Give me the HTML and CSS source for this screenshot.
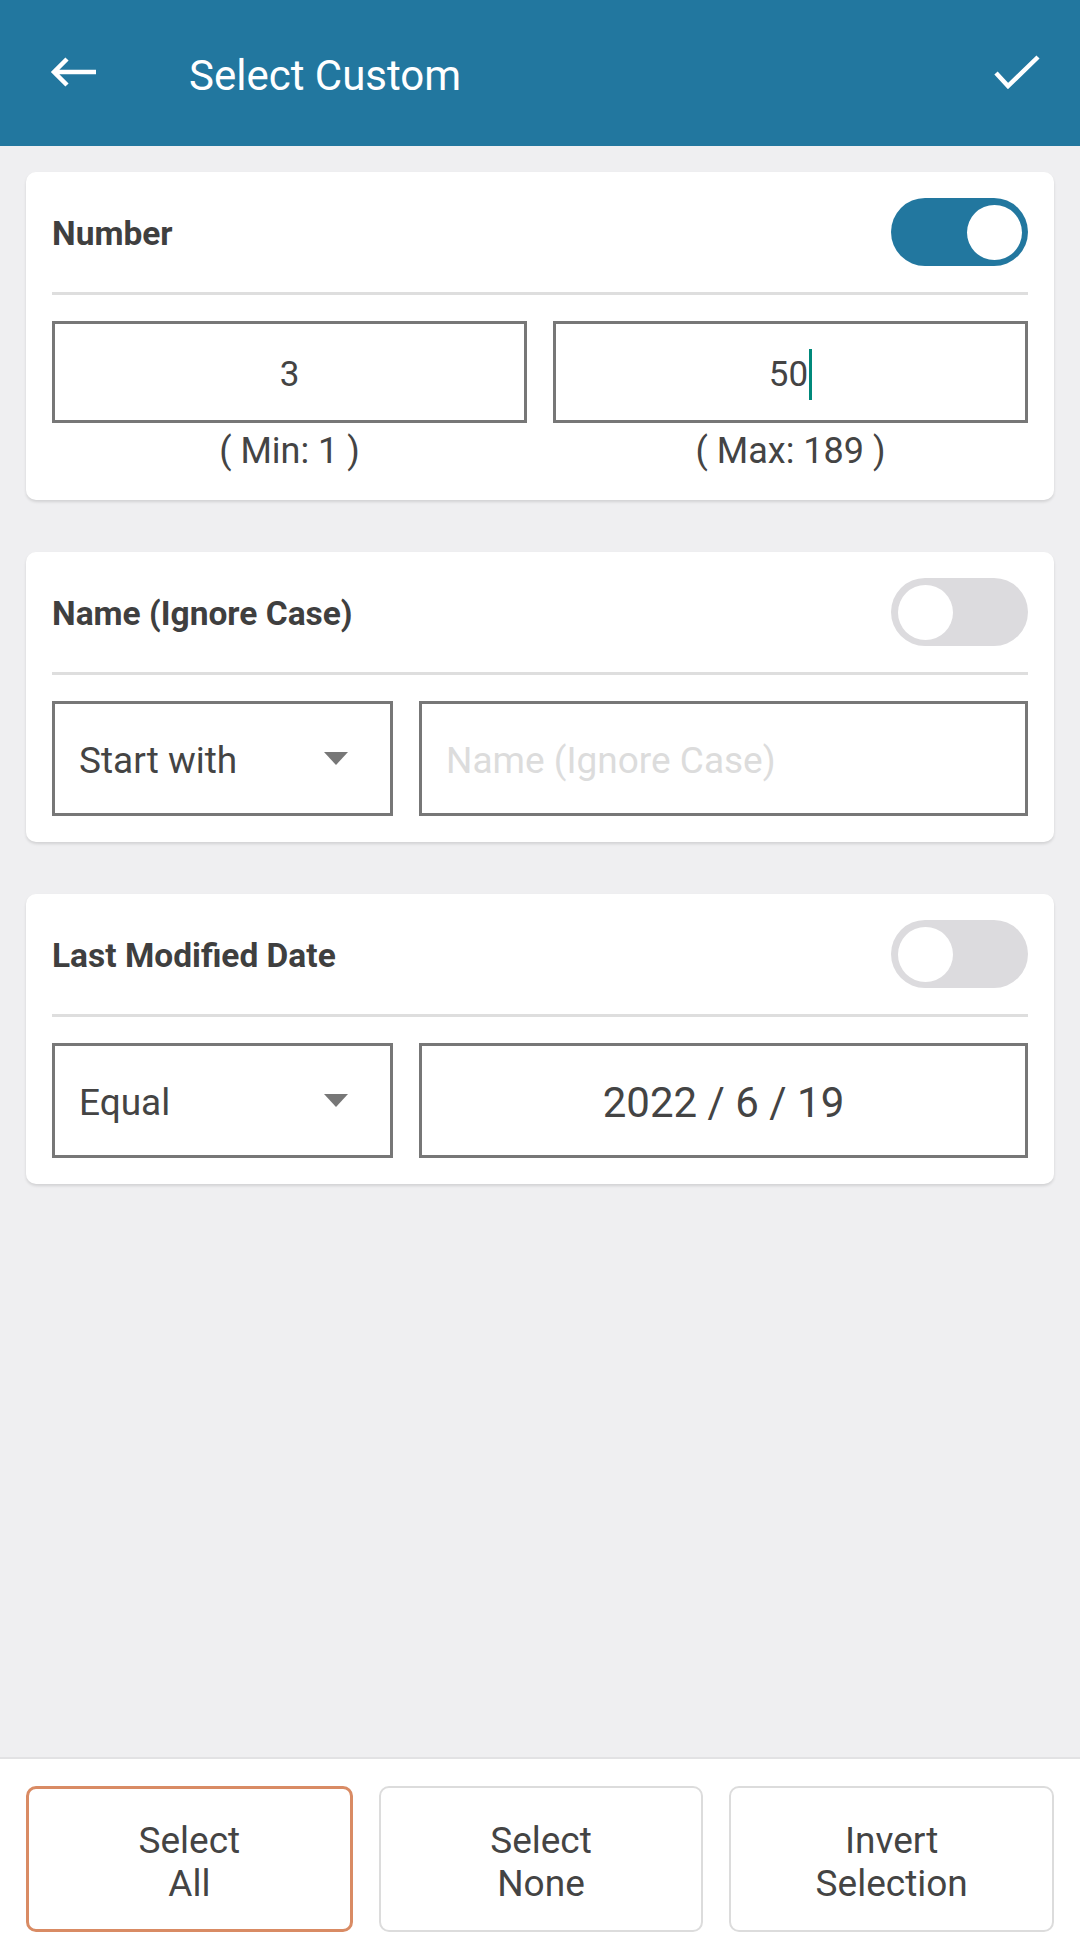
FILE: index.html
```html
<!DOCTYPE html>
<html lang="en">

<head>
    <meta charset="UTF-8">
    <meta name="viewport" content="width=device-width, initial-scale=1.0">
    <title>Select Custom</title>
    <link rel="stylesheet" href="styles.css">
</head>

<body>
<header class="toolbar">
    <svg class="toolbar-icon back" viewBox="0 0 48 32" width="48" height="32">
        <path d="M46 16H4M17 3L4 16l13 13" fill="none" stroke="#fff" stroke-width="4.5"/>
    </svg>
    <h1 class="toolbar-title">Select Custom</h1>
    <svg class="toolbar-icon check" viewBox="0 0 46 34" width="46" height="34">
        <path d="M2 18l12 13L44 2" fill="none" stroke="#fff" stroke-width="4.5"/>
    </svg>
</header>

<main class="content">
    <section class="card">
        <div class="card-head">
            <h3>Number</h3>
            <span class="switch on"><span class="knob"></span></span>
        </div>
        <div class="range-row">
            <div class="range-col">
                <div class="box value-box">3</div>
                <p class="hint">( Min: 1 )</p>
            </div>
            <div class="range-col">
                <div class="box value-box">50<span class="caret"></span></div>
                <p class="hint">( Max: 189 )</p>
            </div>
        </div>
    </section>

    <section class="card">
        <div class="card-head">
            <h3>Name (Ignore Case)</h3>
            <span class="switch"><span class="knob"></span></span>
        </div>
        <div class="field-row">
            <div class="box select-box">Start with<span class="arrow"></span></div>
            <div class="box text-box placeholder">Name (Ignore Case)</div>
        </div>
    </section>

    <section class="card">
        <div class="card-head">
            <h3>Last Modified Date</h3>
            <span class="switch"><span class="knob"></span></span>
        </div>
        <div class="field-row">
            <div class="box select-box">Equal<span class="arrow"></span></div>
            <div class="box text-box date">2022 / 6 / 19</div>
        </div>
    </section>
</main>

<footer class="action-bar">
    <button class="action active">Select<br>All</button>
    <button class="action">Select<br>None</button>
    <button class="action">Invert<br>Selection</button>
</footer>
</body>

</html>
```

FILE: styles.css
```css
* {
    padding: 0;
    margin: 0;
    box-sizing: border-box;
}

html, body {
    height: 100%;
}

body {
    display: flex;
    flex-direction: column;
    font-family: Roboto, "Liberation Sans", sans-serif;
    background-color: #efeff1;
    color: #444;
}

.toolbar {
    height: 146px;
    flex-shrink: 0;
    display: flex;
    align-items: center;
    background-color: #22779f;
    padding: 0 40px 0 50px;
}

.toolbar-icon {
    display: block;
}

.toolbar-icon.back {
    margin-top: -2px;
}

.toolbar-icon.check {
    margin-left: auto;
    margin-top: -2px;
}

.toolbar-title {
    margin-left: 91px;
    color: #fff;
    font-size: 42px;
    font-weight: 400;
    margin-top: 4px;
}

.content {
    flex: 1;
    padding: 26px 26px 0;
    display: flex;
    flex-direction: column;
    gap: 52px;
}

.card {
    background-color: #fff;
    border-radius: 10px;
    padding: 26px;
    box-shadow: 0 2px 3px rgba(0, 0, 0, 0.12);
}

.card-head {
    display: flex;
    align-items: center;
    justify-content: space-between;
    height: 68px;
    padding-bottom: 26px;
    box-sizing: content-box;
    border-bottom: 3px solid #dedede;
    margin-bottom: 26px;
}

.card-head h3 {
    font-size: 33.5px;
    font-weight: 700;
    color: #3f3f3f;
    padding-top: 2px;
}

.switch {
    position: relative;
    width: 137px;
    height: 68px;
    border-radius: 34px;
    background-color: #dcdbde;
}

.switch .knob {
    position: absolute;
    top: 7px;
    left: 7px;
    width: 55px;
    height: 55px;
    border-radius: 50%;
    background-color: #fff;
}

.switch.on {
    background-color: #22779f;
}

.switch.on .knob {
    left: auto;
    right: 6px;
}

.box {
    border: 3px solid #777;
    display: flex;
    align-items: center;
    font-size: 37px;
    color: #444;
    padding-top: 4px;
}

.range-row {
    display: flex;
    gap: 26px;
}

.range-col {
    flex: 1;
}

.value-box {
    height: 102px;
    justify-content: center;
    font-size: 35px;
}

.caret {
    display: inline-block;
    width: 3px;
    height: 51px;
    background-color: #00897b;
    margin-left: 1px;
}

.hint {
    text-align: center;
    font-size: 36px;
    line-height: 40px;
    margin-top: 8px;
    margin-bottom: 3px;
}

.field-row {
    display: flex;
    gap: 26px;
    height: 115px;
}

.select-box {
    width: 341px;
    flex-shrink: 0;
    padding-left: 24px;
}

.arrow {
    margin-left: auto;
    margin-right: 42px;
    margin-top: -4px;
    width: 0;
    height: 0;
    border-left: 12px solid transparent;
    border-right: 12px solid transparent;
    border-top: 13px solid #777;
}

.text-box {
    flex: 1;
    padding-left: 24px;
}

.placeholder {
    color: #dcdcdc;
}

.date {
    justify-content: center;
    font-size: 42px;
    padding-left: 0;
}

.action-bar {
    flex-shrink: 0;
    height: 200px;
    background-color: #fff;
    border-top: 2px solid #e2e2e4;
    display: flex;
    gap: 26px;
    padding: 27px 26px 0;
}

.action {
    flex: 1;
    height: 146px;
    border: 2px solid #dcdcdc;
    border-radius: 10px;
    background-color: #fff;
    font-family: Roboto, "Liberation Sans", sans-serif;
    font-size: 37px;
    line-height: 43px;
    color: #444;
    padding-top: 6px;
}

.action.active {
    border: 3px solid #d98b64;
}
```
